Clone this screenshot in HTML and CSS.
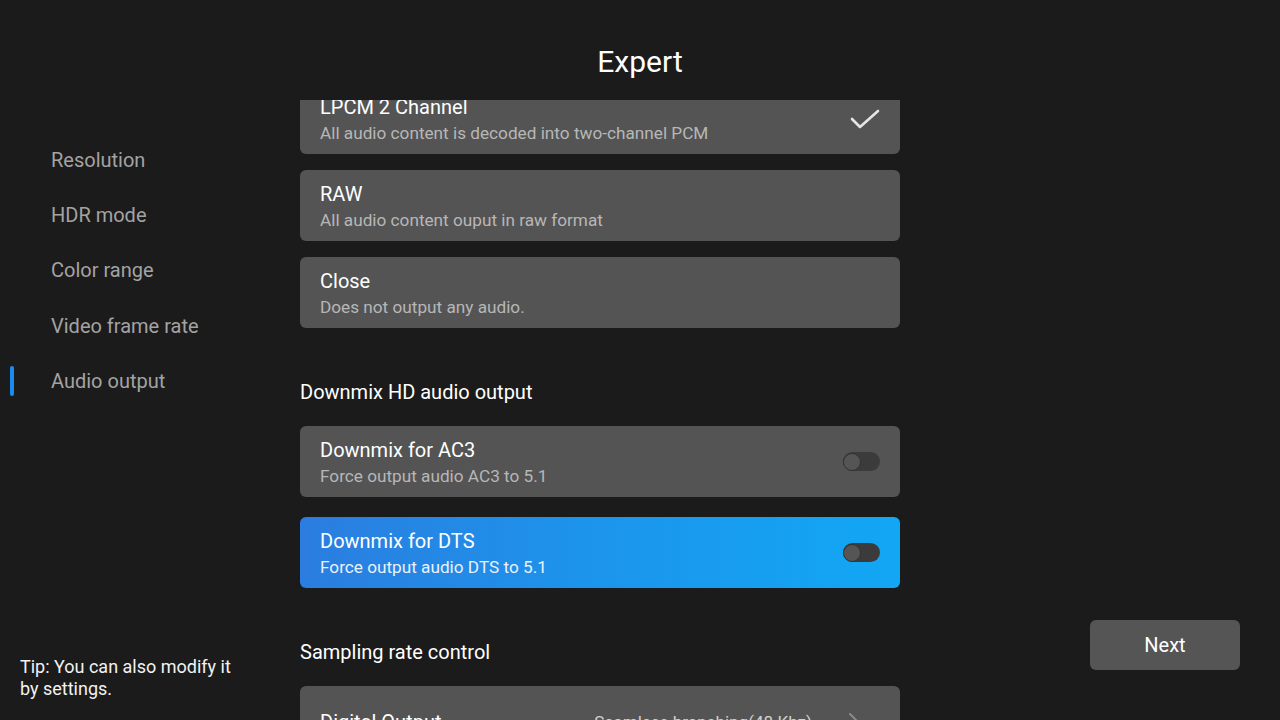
FILE: index.html
```html
<!DOCTYPE html>
<html lang="en">
<head>
  <meta charset="UTF-8" />
  <meta name="viewport" content="width=device-width, initial-scale=1.0" />
  <title>Expert</title>
  <link rel="stylesheet" href="styles.css">
</head>
<body>
  <div class="page">
    <h1 class="title">Expert</h1>

    <div class="sidebar">
      <ul class="nav">
        <li class="nav-item"><span class="bar"></span>Resolution</li>
        <li class="nav-item"><span class="bar"></span>HDR mode</li>
        <li class="nav-item"><span class="bar"></span>Color range</li>
        <li class="nav-item"><span class="bar"></span>Video frame rate</li>
        <li class="nav-item active"><span class="bar"></span>Audio output</li>
      </ul>
      <div class="tip">Tip: You can also modify it<br>by settings.</div>
    </div>

    <div class="content">
      <div class="list">
        <div class="card">
          <div class="card-text">
            <div class="card-title">LPCM 2 Channel</div>
            <div class="card-sub">All audio content is decoded into two-channel PCM</div>
          </div>
          <svg class="check" width="30" height="20" viewBox="0 0 30 20">
            <path d="M2 10 L10 18 L28 2" fill="none" stroke="#e6e6e6" stroke-width="2.6" stroke-linecap="round" stroke-linejoin="round"/>
          </svg>
        </div>
        <div class="card">
          <div class="card-text">
            <div class="card-title">RAW</div>
            <div class="card-sub">All audio content ouput in raw format</div>
          </div>
        </div>
        <div class="card">
          <div class="card-text">
            <div class="card-title">Close</div>
            <div class="card-sub">Does not output any audio.</div>
          </div>
        </div>

        <div class="section">Downmix HD audio output</div>
        <div class="card">
          <div class="card-text">
            <div class="card-title">Downmix for AC3</div>
            <div class="card-sub">Force output audio AC3 to 5.1</div>
          </div>
          <span class="toggle"><span class="knob"></span></span>
        </div>
        <div class="card focused">
          <div class="card-text">
            <div class="card-title">Downmix for DTS</div>
            <div class="card-sub">Force output audio DTS to 5.1</div>
          </div>
          <span class="toggle"><span class="knob"></span></span>
        </div>

        <div class="section">Sampling rate control</div>
        <div class="card">
          <div class="card-title">Digital Output</div>
          <div class="value">Seamless branching(48 Khz)</div>
          <svg class="chevron" width="12" height="20" viewBox="0 0 12 20">
            <path d="M2 2 L10 10 L2 18" fill="none" stroke="#8a8a8a" stroke-width="2" stroke-linecap="round" stroke-linejoin="round"/>
          </svg>
        </div>
      </div>
    </div>

    <div class="actions">
      <button class="next">Next</button>
    </div>
  </div>
</body>
</html>
```

FILE: styles.css
```css
* {
  box-sizing: border-box;
}
html, body {
  margin: 0;
  height: 100%;
}
body {
  background-color: #1b1b1b;
  color: #fff;
  font-family: Roboto, "Noto Sans", sans-serif;
  overflow: hidden;
}
.page {
  display: grid;
  grid-template-columns: 300px 600px 1fr;
  grid-template-rows: 100px 620px;
  height: 720px;
}
.title {
  grid-column: 1 / 4;
  margin: 0;
  padding-top: 45px;
  font-size: 30px;
  line-height: 34px;
  font-weight: 400;
  text-align: center;
}
.sidebar {
  display: flex;
  flex-direction: column;
  padding-bottom: 20px;
}
.nav {
  list-style: none;
  margin: 0;
  padding: 32px 0 0 10px;
}
.nav-item {
  display: flex;
  align-items: center;
  gap: 37px;
  height: 55.3px;
  font-size: 20px;
  color: #a3a3a3;
}
.bar {
  width: 4px;
  height: 30px;
  border-radius: 2px;
}
.nav-item.active .bar {
  background-color: #1a8cf0;
}
.tip {
  margin-top: auto;
  padding-left: 20px;
  font-size: 18px;
  line-height: 22px;
  color: #f2f2f2;
}
.content {
  overflow: hidden;
}
.list {
  margin-top: -17px;
  display: flex;
  flex-direction: column;
}
.card {
  display: flex;
  align-items: center;
  height: 71px;
  padding: 0 20px;
  margin-bottom: 16px;
  background-color: #545454;
  border-radius: 6px;
  flex-shrink: 0;
}
.card-text {
  flex: 1;
  padding-top: 4px;
}
.card-title {
  font-size: 20px;
  line-height: 24px;
  color: #fff;
}
.card-sub {
  margin-top: 2px;
  font-size: 17.2px;
  line-height: 25px;
  color: #b7b7b7;
}
.card.focused {
  background: linear-gradient(90deg, #2b7ddf 0%, #1c95ec 50%, #12a7f5 100%);
  margin-top: 4px;
}
.card.focused .card-sub {
  color: #e8f2fc;
}
.section {
  margin: 36px 0 22px;
  font-size: 20px;
  line-height: 24px;
  color: #fff;
}
.toggle {
  display: inline-flex;
  align-items: center;
  width: 37px;
  height: 19px;
  border-radius: 10px;
  background-color: #3b3b3b;
}
.knob {
  width: 18px;
  height: 18px;
  border-radius: 50%;
  background-color: #555;
  border: 1px solid #333;
}
.value {
  margin-left: auto;
  font-size: 17.1px;
  color: #d0d0d0;
}
.chevron {
  margin-left: 36px;
  margin-right: 20px;
}
.actions {
  display: flex;
  justify-content: flex-end;
  align-items: flex-end;
  padding: 0 40px 50px 0;
}
.next {
  width: 150px;
  height: 50px;
  border: none;
  border-radius: 6px;
  background-color: #555;
  color: #fff;
  font-family: Roboto, "Noto Sans", sans-serif;
  font-size: 20px;
}
```
